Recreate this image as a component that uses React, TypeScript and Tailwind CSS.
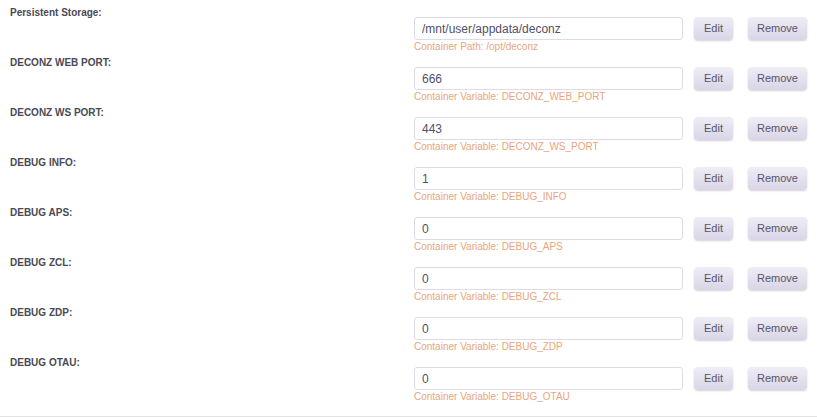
import React from 'react';

interface Mapping {
  label: string;
  value: string;
  hint: string;
}

const rows: Mapping[] = [
  { label: 'Persistent Storage:', value: '/mnt/user/appdata/deconz', hint: 'Container Path: /opt/deconz' },
  { label: 'DECONZ WEB PORT:', value: '666', hint: 'Container Variable: DECONZ_WEB_PORT' },
  { label: 'DECONZ WS PORT:', value: '443', hint: 'Container Variable: DECONZ_WS_PORT' },
  { label: 'DEBUG INFO:', value: '1', hint: 'Container Variable: DEBUG_INFO' },
  { label: 'DEBUG APS:', value: '0', hint: 'Container Variable: DEBUG_APS' },
  { label: 'DEBUG ZCL:', value: '0', hint: 'Container Variable: DEBUG_ZCL' },
  { label: 'DEBUG ZDP:', value: '0', hint: 'Container Variable: DEBUG_ZDP' },
  { label: 'DEBUG OTAU:', value: '0', hint: 'Container Variable: DEBUG_OTAU' },
];

const btn =
  'h-[23px] rounded-[4px] bg-gradient-to-b from-[#efedf5] to-[#d9d5e7] text-[11px] text-[#55556a] shadow-[0_1px_2px_rgba(0,0,0,0.18)]';

const ConfigRow: React.FC<{ row: Mapping }> = ({ row }) => (
  <div className="flex h-[50px]">
    <div className="w-[414px] shrink-0 pl-[10px] pt-[6px] text-[10px] leading-[13px] font-bold text-[#4a4a55]">
      {row.label}
    </div>
    <div className="pt-[17px]">
      <div className="flex items-center">
        <input
          readOnly
          value={row.value}
          className="h-[23px] w-[269px] rounded-[3px] border border-[#dddbe8] bg-white px-[7px] text-[12px] text-[#505068] outline-none"
        />
        <button className={`${btn} ml-[11px] w-[39px]`}>Edit</button>
        <button className={`${btn} ml-[15px] w-[59px]`}>Remove</button>
      </div>
      <div className="mt-[1px] text-[10px] leading-[12px] text-[#e9a57c]">{row.hint}</div>
    </div>
  </div>
);

export default function App() {
  return (
    <div className="w-[817px] bg-white font-['Liberation_Sans',Arial,sans-serif]">
      <div className="border-b border-[#e3e3e3] pb-4">
        {rows.map(r => (
          <ConfigRow key={r.label} row={r} />
        ))}
      </div>
    </div>
  );
}
